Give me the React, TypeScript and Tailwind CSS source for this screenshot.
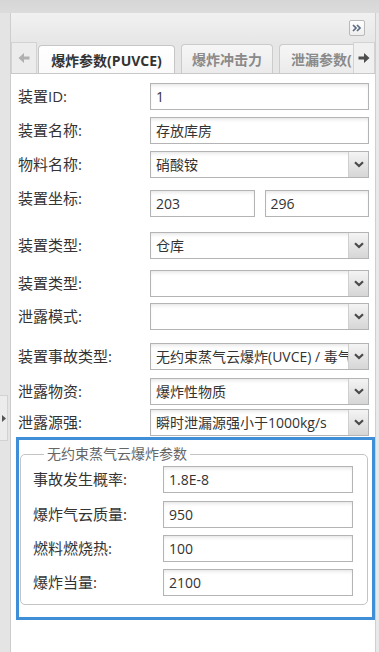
import React from "react";

const font = "font-['Segoe_UI','Open_Sans','Noto_Sans_CJK_SC',sans-serif]";

const Chevron = () => (
  <svg width="10" height="7" viewBox="0 0 10 7">
    <path d="M1 1.2 L5 5 L9 1.2" fill="none" stroke="#4a4a4a" strokeWidth="2.2" />
  </svg>
);

const Field = ({ value = "", select = false, className = "" }: { value?: string; select?: boolean; className?: string }) => (
  <div
    className={`flex min-w-0 h-[27px] border border-[#b4b4b4] bg-white shadow-[inset_0_3px_4px_-2px_rgba(0,0,0,0.13)] ${className}`}
  >
    <div className="flex-1 min-w-0 overflow-hidden whitespace-nowrap pl-[5px] text-[14px] leading-[25px] text-[#333]">
      {value}
    </div>
    {select && (
      <div className="w-[20px] shrink-0 flex items-center justify-center border-l border-[#cfcfcf] bg-gradient-to-b from-[#f4f4f4] to-[#d6d6d6]">
        <Chevron />
      </div>
    )}
  </div>
);

const Row = ({ label, mt, children }: { label: string; mt: string; children: React.ReactNode }) => (
  <div className={`flex items-center ${mt}`}>
    <div className="w-[132px] shrink-0 text-[15px] text-[#333]">{label}</div>
    <div className="flex-1 min-w-0 flex gap-[10px]">{children}</div>
  </div>
);

const InnerRow = ({ label, value, mt }: { label: string; value: string; mt: string }) => (
  <div className={`flex items-center ${mt}`}>
    <div className="w-[130px] shrink-0 text-[15px] text-[#333]">{label}</div>
    <Field value={value} className="flex-1" />
  </div>
);

const Arrow = ({ dir, color }: { dir: "l" | "r"; color: string }) => (
  <svg width="12" height="12" viewBox="0 0 12 12" style={{ transform: dir === "l" ? "scaleX(-1)" : undefined }}>
    <path d="M0.5 4.5 H6 V1 L11.5 6 L6 11 V7.5 H0.5 Z" fill={color} />
  </svg>
);

export default function App() {
  return (
    <div className={`w-[379px] h-[652px] flex flex-col overflow-hidden bg-[#d9d9d9] ${font}`}>
      <div className="h-[13px] shrink-0 bg-gradient-to-b from-[#d6d6d6] to-[#dcdcdc]" />
      <div className="flex flex-1 min-h-0">
        {/* collapsed west panel */}
        <div className="w-[11px] shrink-0 flex flex-col bg-[#e4e4e4] border-r border-[#cdcdcd]">
          <div className="mt-[382px] h-[46px] w-[8px] flex items-center justify-center bg-[#ececec] border-y border-r border-[#d2d2d2]">
            <svg width="4" height="7" viewBox="0 0 4 7">
              <path d="M0 0 L4 3.5 L0 7 Z" fill="#555" />
            </svg>
          </div>
        </div>

        {/* main panel */}
        <div className="w-[365px] shrink-0 flex flex-col border-r border-[#cfcfcf] bg-white">
          <div className="h-[29px] shrink-0 flex items-center justify-end pr-[10px] bg-gradient-to-b from-[#f1f1f1] to-[#e7e7e7]">
            <div className="w-[16px] h-[16px] flex items-center justify-center bg-gradient-to-b from-white to-[#eeeeee] border border-[#b9b9b9] rounded-[2px]">
              <svg width="10" height="8" viewBox="0 0 10 8">
                <path d="M1 1 L4 4 L1 7 M5 1 L8 4 L5 7" fill="none" stroke="#5c6b80" strokeWidth="1.7" />
              </svg>
            </div>
          </div>

          {/* tab strip */}
          <div className="h-[32px] shrink-0 flex items-end bg-[#e6e6e6] border-b border-[#c9c9c9]">
            <div className="w-[26px] h-[31px] flex items-center justify-center bg-[#ececec] border border-b-0 border-[#d3d3d3]">
              <Arrow dir="l" color="#b0b0b0" />
            </div>
            <div className="flex-1 min-w-0 h-[29px] flex items-end gap-[6px] overflow-hidden pl-[1px]">
              <div className="shrink-0 w-[137px] h-[29px] -mb-px flex items-center justify-center rounded-t-[4px] border border-b-0 border-[#c6c6c6] bg-gradient-to-b from-white to-[#fafafa] text-[14px] font-bold text-[#333]">
                爆炸参数(PUVCE)
              </div>
              <div className="shrink-0 w-[92px] h-[29px] flex items-center justify-center rounded-t-[4px] border border-b-0 border-[#cbcbcb] bg-gradient-to-b from-[#f6f6f6] to-[#ebebeb] text-[14px] font-bold text-[#8a8a8a]">
                爆炸冲击力
              </div>
              <div className="shrink-0 w-[74px] h-[29px] flex items-center pl-[11px] rounded-tl-[4px] border border-b-0 border-r-0 border-[#cbcbcb] bg-gradient-to-b from-[#f6f6f6] to-[#ebebeb] text-[14px] font-bold text-[#8a8a8a] whitespace-nowrap">
                泄漏参数(
              </div>
            </div>
            <div className="w-[22px] h-[31px] flex items-center justify-center bg-[#f0f0f0] border border-b-0 border-[#d3d3d3]">
              <Arrow dir="r" color="#4d4d4d" />
            </div>
          </div>

          {/* form */}
          <div className="flex-1 flex flex-col pt-[9px]">
            <div className="flex flex-col pl-[7px] pr-[6px]">
              <Row label="装置ID:" mt="">
                <Field value="1" className="flex-1" />
              </Row>
              <Row label="装置名称:" mt="mt-[7px]">
                <Field value="存放库房" className="flex-1" />
              </Row>
              <Row label="物料名称:" mt="mt-[7px]">
                <Field value="硝酸铵" select className="flex-1" />
              </Row>
              <div className="flex mt-[10px] h-[29px]">
                <div className="w-[132px] shrink-0 text-[15px] text-[#333] leading-[20px]">装置坐标:</div>
                <div className="flex-1 min-w-0 flex gap-[10px] items-end">
                  <Field value="203" className="flex-1" />
                  <Field value="296" className="flex-1" />
                </div>
              </div>
              <Row label="装置类型:" mt="mt-[15px]">
                <Field value="仓库" select className="flex-1" />
              </Row>
              <Row label="装置类型:" mt="mt-[11px]">
                <Field select className="flex-1" />
              </Row>
              <Row label="泄露模式:" mt="mt-[6px]">
                <Field select className="flex-1" />
              </Row>
              <Row label="装置事故类型:" mt="mt-[13px]">
                <Field value="无约束蒸气云爆炸(UVCE) / 毒气扩散" select className="flex-1" />
              </Row>
              <Row label="泄露物资:" mt="mt-[8px]">
                <Field value="爆炸性物质" select className="flex-1" />
              </Row>
              <Row label="泄露源强:" mt="mt-[4px]">
                <Field value="瞬时泄漏源强小于1000kg/s" select className="flex-1" />
              </Row>
            </div>

            {/* highlighted parameter block */}
            <div className="ml-[5px] mt-[1px] border-[3px] border-[#3f8fd8] pl-[1px] pr-[4px] pt-[4px] pb-[12px]">
              <fieldset className="border border-[#c4c4c4] rounded-[5px] pl-[12px] pr-[14px] pb-[8px]">
                <legend className="ml-[11px] px-[3px] text-[14px] leading-[20px] text-[#666]">无约束蒸气云爆炸参数</legend>
                <InnerRow label="事故发生概率:" value="1.8E-8" mt="mt-[2px]" />
                <InnerRow label="爆炸气云质量:" value="950" mt="mt-[8px]" />
                <InnerRow label="燃料燃烧热:" value="100" mt="mt-[7px]" />
                <InnerRow label="爆炸当量:" value="2100" mt="mt-[7px]" />
              </fieldset>
            </div>
          </div>
        </div>

        <div className="flex-1 bg-[#e8e8e8]" />
      </div>
    </div>
  );
}
